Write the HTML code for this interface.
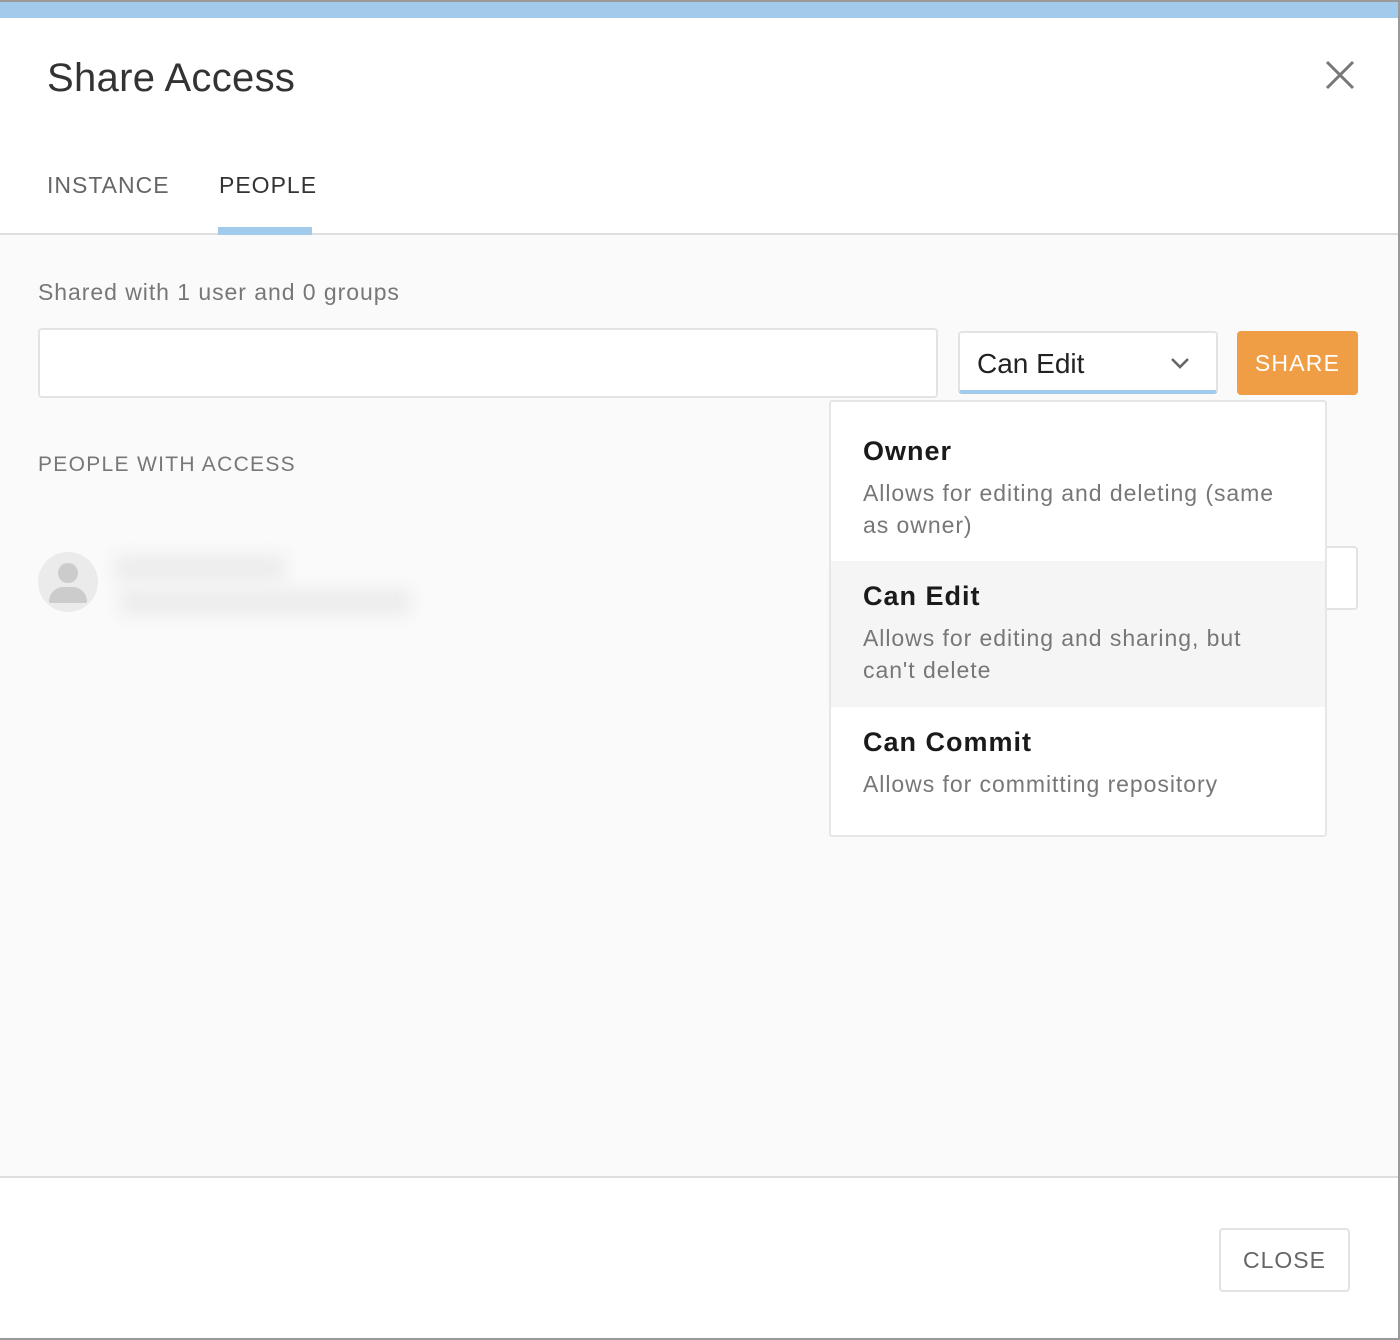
<!DOCTYPE html>
<html><head><style>
*{box-sizing:border-box;margin:0;padding:0}
body{width:1400px;height:1340px;background:#9a9a9a;font-family:"Liberation Sans",sans-serif;position:relative;overflow:hidden}
.m{position:absolute;left:0;top:2px;width:1398px;height:1336px;background:#fafafa;overflow:hidden}
.bar{position:absolute;left:0;top:0;width:100%;height:16px;background:#a2cbeb}
.hd{position:absolute;left:0;top:16px;width:100%;height:217px;background:#fff;border-bottom:2px solid #dedede}
.t{position:absolute;left:47px;top:38px;font-size:40px;color:#333;letter-spacing:0.3px}
.tab{position:absolute;top:154px;font-size:23px;letter-spacing:1px;color:#666}
.ul{position:absolute;left:218px;top:209px;width:94px;height:8px;background:#a2cbeb}
.ab{position:absolute}
.ft{position:absolute;left:0;top:1174px;width:100%;height:162px;background:#fff;border-top:2px solid #dedede}
.dd{position:absolute;left:829px;top:398px;width:498px;height:437px;background:#fff;border:2px solid #e6e6e6;border-radius:3px;overflow:hidden}
.it{position:absolute;left:0;width:100%;padding-left:32px}
.it b{display:block;font-size:27px;color:#1a1a1a;margin-top:34px;letter-spacing:1px}
.it p{font-size:23px;color:#777;line-height:32px;margin-top:10px;letter-spacing:0.95px}
</style></head><body>
<div class="m">
<div class="bar"></div>
<div class="hd">
 <div class="t">Share Access</div>
 <svg class="ab" style="left:1325px;top:42px" width="30" height="30"><path d="M2 2L28 28M28 2L2 28" stroke="#777" stroke-width="3"/></svg>
 <div class="tab" style="left:47px">INSTANCE</div>
 <div class="tab" style="left:219px;color:#333">PEOPLE</div>
 <div class="ul"></div>
</div>
<div class="ab" style="left:38px;top:277px;font-size:23px;color:#777;letter-spacing:0.95px">Shared with 1 user and 0 groups</div>
<div class="ab" style="left:38px;top:326px;width:900px;height:70px;background:#fff;border:2px solid #e3e3e3;border-radius:4px"></div>
<div class="ab" style="left:958px;top:329px;width:260px;height:63px;background:#fff;border:2px solid #e3e3e3;border-bottom:4px solid #a2cbeb;border-radius:4px"></div>
<div class="ab" style="left:977px;top:346px;font-size:28px;color:#222">Can Edit</div>
<svg class="ab" style="left:1170px;top:354px" width="20" height="14"><path d="M2 3L10 11L18 3" stroke="#666" stroke-width="2.6" fill="none"/></svg>
<div class="ab" style="left:1237px;top:329px;width:121px;height:64px;background:#ef9e45;border-radius:4px;color:#fff;font-size:23px;letter-spacing:1.2px;text-align:center;line-height:64px">SHARE</div>
<div class="ab" style="left:38px;top:451px;font-size:21px;letter-spacing:1.3px;color:#777">PEOPLE WITH ACCESS</div>
<div class="ab" style="left:38px;top:550px;width:60px;height:60px;border-radius:50%;background:#ebebeb"></div>
<div class="ab" style="left:58px;top:561px;width:20px;height:20px;border-radius:50%;background:#ccc"></div>
<div class="ab" style="left:49px;top:585px;width:38px;height:16px;border-radius:19px 19px 2px 2px;background:#ccc"></div>
<div class="ab" style="left:115px;top:553px;width:170px;height:26px;background:#ececec;filter:blur(8px)"></div>
<div class="ab" style="left:120px;top:587px;width:290px;height:26px;background:#ececec;filter:blur(8px)"></div>
<div class="ab" style="left:1300px;top:544px;width:58px;height:64px;background:#fff;border:2px solid #e3e3e3;border-radius:4px"></div>
<div class="dd">
 <div class="it" style="top:0;height:159px"><b>Owner</b><p>Allows for editing and deleting (same<br>as owner)</p></div>
 <div class="it" style="top:159px;height:146px;background:#f5f5f5"><b style="margin-top:20px">Can Edit</b><p>Allows for editing and sharing, but<br>can't delete</p></div>
 <div class="it" style="top:305px;height:130px"><b style="margin-top:20px">Can Commit</b><p>Allows for committing repository</p></div>
</div>
<div class="ft">
 <div class="ab" style="left:1219px;top:50px;width:131px;height:64px;border:2px solid #e3e3e3;border-radius:4px;text-align:center;line-height:60px;font-size:23px;letter-spacing:1px;color:#666">CLOSE</div>
</div>
</div>
</body></html>
